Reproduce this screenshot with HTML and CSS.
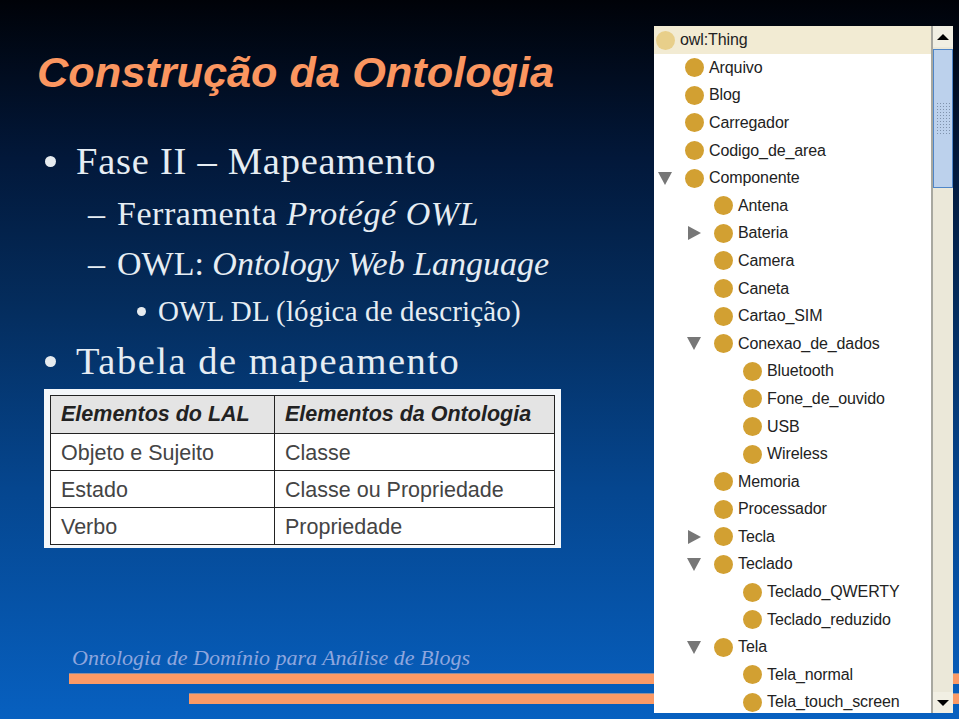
FILE: index.html
```html
<!DOCTYPE html>
<html lang="en">
<head>
    <meta charset="UTF-8">
    <meta name="viewport" content="width=device-width, initial-scale=1.0">
    <title>Construção da Ontologia</title>
    <link rel="stylesheet" href="styles.css">
</head>
<body>
    <div class="slide">
        <h1 class="title">Construção da Ontologia</h1>

        <div class="point level1 first"><span class="bullet"></span><span class="fase">Fase II – Mapeamento</span></div>
        <div class="point level2 ferr-row"><span class="dash">–</span><span class="ferr">Ferramenta <em>Protégé OWL</em></span></div>
        <div class="point level2"><span class="dash">–</span><span class="owl">OWL: <em>Ontology Web Language</em></span></div>
        <div class="point level3"><span class="bullet small"></span><span class="dl">OWL DL (lógica de descrição)</span></div>
        <div class="point level1"><span class="bullet"></span><span class="tab">Tabela de mapeamento</span></div>

        <div class="table-box">
            <table class="map-table">
                <tr class="head"><th>Elementos do LAL</th><th>Elementos da Ontologia</th></tr>
                <tr><td>Objeto e Sujeito</td><td>Classe</td></tr>
                <tr><td>Estado</td><td>Classe ou Propriedade</td></tr>
                <tr><td>Verbo</td><td>Propriedade</td></tr>
            </table>
        </div>

        <div class="footer-text">Ontologia de Domínio para Análise de Blogs</div>
        <div class="bar bar-top"></div>
        <div class="bar bar-bottom"></div>

        <div class="tree-panel">
            <ul class="tree">
                <li class="node root"><span class="dot"></span><span class="name">owl:Thing</span></li>
                <li class="node l1"><span class="slot"></span><span class="dot"></span><span class="name">Arquivo</span></li>
                <li class="node l1"><span class="slot"></span><span class="dot"></span><span class="name">Blog</span></li>
                <li class="node l1"><span class="slot"></span><span class="dot"></span><span class="name">Carregador</span></li>
                <li class="node l1"><span class="slot"></span><span class="dot"></span><span class="name">Codigo_de_area</span></li>
                <li class="node l1"><span class="slot open"></span><span class="dot"></span><span class="name">Componente</span></li>
                <li class="node l2"><span class="slot"></span><span class="dot"></span><span class="name">Antena</span></li>
                <li class="node l2"><span class="slot closed"></span><span class="dot"></span><span class="name">Bateria</span></li>
                <li class="node l2"><span class="slot"></span><span class="dot"></span><span class="name">Camera</span></li>
                <li class="node l2"><span class="slot"></span><span class="dot"></span><span class="name">Caneta</span></li>
                <li class="node l2"><span class="slot"></span><span class="dot"></span><span class="name">Cartao_SIM</span></li>
                <li class="node l2"><span class="slot open"></span><span class="dot"></span><span class="name">Conexao_de_dados</span></li>
                <li class="node l3"><span class="slot"></span><span class="dot"></span><span class="name">Bluetooth</span></li>
                <li class="node l3"><span class="slot"></span><span class="dot"></span><span class="name">Fone_de_ouvido</span></li>
                <li class="node l3"><span class="slot"></span><span class="dot"></span><span class="name">USB</span></li>
                <li class="node l3"><span class="slot"></span><span class="dot"></span><span class="name">Wireless</span></li>
                <li class="node l2"><span class="slot"></span><span class="dot"></span><span class="name">Memoria</span></li>
                <li class="node l2"><span class="slot"></span><span class="dot"></span><span class="name">Processador</span></li>
                <li class="node l2"><span class="slot closed"></span><span class="dot"></span><span class="name">Tecla</span></li>
                <li class="node l2"><span class="slot open"></span><span class="dot"></span><span class="name">Teclado</span></li>
                <li class="node l3"><span class="slot"></span><span class="dot"></span><span class="name">Teclado_QWERTY</span></li>
                <li class="node l3"><span class="slot"></span><span class="dot"></span><span class="name">Teclado_reduzido</span></li>
                <li class="node l2"><span class="slot open"></span><span class="dot"></span><span class="name">Tela</span></li>
                <li class="node l3"><span class="slot"></span><span class="dot"></span><span class="name">Tela_normal</span></li>
                <li class="node l3"><span class="slot"></span><span class="dot"></span><span class="name">Tela_touch_screen</span></li>
            </ul>
            <div class="scrollbar">
                <div class="scroll-btn"><span class="arrow-up"></span></div>
                <div class="scroll-thumb">
                    <div class="grip"></div>
                </div>
                <div class="scroll-track"></div>
                <div class="scroll-btn"><span class="arrow-down"></span></div>
            </div>
        </div>
    </div>
</body>
</html>
```

FILE: styles.css
```css
* {
    box-sizing: border-box;
}

body {
    margin: 0;
    padding: 0;
    background-color: #000;
}

.slide {
    position: relative;
    width: 959px;
    height: 719px;
    overflow: hidden;
    padding-top: 47px;
    display: flex;
    flex-direction: column;
    background: linear-gradient(to bottom, #000208 0%, #02183a 22%, #042c5c 42%, #05468f 68%, #0760c0 100%);
    font-family: "Liberation Serif", serif;
    color: #e6edf3;
}

.title {
    margin: 0 0 0 37px;
    font-family: "Liberation Sans", Arial, sans-serif;
    font-size: 43.3px;
    line-height: 51px;
    font-style: italic;
    font-weight: bold;
    color: #fb9660;
}

.point {
    display: flex;
    align-items: center;
    white-space: nowrap;
}

.level1 {
    height: 50px;
    padding-left: 45px;
    font-size: 38.5px;
}

.first {
    margin-top: 38px;
}

.level2 {
    height: 50px;
    padding-left: 88px;
    font-size: 34px;
}

.ferr-row {
    margin-top: 3px;
}

.level3 {
    height: 44px;
    margin-bottom: 3px;
    padding-left: 137px;
    font-size: 29px;
}

.bullet {
    width: 11px;
    height: 11px;
    margin-right: 20px;
    border-radius: 50%;
    background-color: #e6ebef;
}

.bullet.small {
    width: 9px;
    height: 9px;
    margin-right: 12px;
}

.dash {
    width: 29px;
}

.fase { letter-spacing: 0.75px; }
.ferr { letter-spacing: 0.55px; }
.owl { letter-spacing: 0; }
.dl { letter-spacing: 0.15px; }
.tab { letter-spacing: 1.5px; }

.table-box {
    width: 517px;
    height: 159px;
    margin: 3px 0 0 44px;
    padding: 6px;
    background-color: #f4f7fa;
}

.map-table {
    width: 505px;
    height: 148px;
    border-collapse: collapse;
    background-color: #fff;
    font-family: "Liberation Sans", Arial, sans-serif;
    font-size: 21.5px;
    color: #444;
}

.map-table th,
.map-table td {
    border: 1.5px solid #222;
    padding: 0 10px;
    text-align: left;
}

.map-table td {
    height: 37px;
    padding-top: 2px;
}

.map-table th:first-child,
.map-table td:first-child {
    width: 224px;
}

.map-table th {
    height: 38px;
    font-style: italic;
    background-color: #e4e4e4;
    color: #222;
}

.footer-text {
    margin: 97px 0 0 72px;
    font-size: 22px;
    line-height: 26px;
    font-style: italic;
    color: #8ea6de;
    white-space: nowrap;
}

.bar {
    height: 10px;
    background-color: #fb9a66;
    box-shadow: 0 -1px 0 #8d8ea0;
}

.bar-top {
    margin: 3px 0 0 69px;
}

.bar-bottom {
    margin: 10px 0 0 189px;
}

/* tree window sits on top of the slide and its bars */
.tree-panel {
    position: absolute;
    left: 654px;
    top: 26px;
    width: 299px;
    height: 687px;
    display: flex;
    background-color: #fff;
    font-family: "Liberation Sans", Arial, sans-serif;
    color: #222;
}

.tree {
    flex: 1;
    margin: 0;
    padding: 0;
    list-style: none;
    overflow: hidden;
}

.node {
    display: flex;
    align-items: center;
    height: 27.6px;
    padding-left: 2px;
    font-size: 16px;
    letter-spacing: -0.1px;
    white-space: nowrap;
}

.root {
    height: 28px;
    background-color: #f2ebd3;
}

.l2 { padding-left: 31px; }
.l3 { padding-left: 60px; }

.slot {
    flex: none;
    display: flex;
    align-items: center;
    width: 29px;
}

.open::before {
    content: "";
    margin-left: 2px;
    border-left: 7px solid transparent;
    border-right: 7px solid transparent;
    border-top: 13px solid #777;
}

.closed::before {
    content: "";
    margin-left: 3px;
    border-top: 7px solid transparent;
    border-bottom: 7px solid transparent;
    border-left: 13px solid #777;
}

.dot {
    flex: none;
    width: 19px;
    height: 19px;
    margin-right: 5px;
    border-radius: 50%;
    background-color: #d2a032;
}

.root .dot {
    background-color: #e8cf8a;
}

.scrollbar {
    width: 22px;
    display: flex;
    flex-direction: column;
    border-left: 2px solid #a8a8a0;
    background-color: #ebe8d9;
}

.scroll-btn {
    height: 21px;
    display: flex;
    align-items: center;
    justify-content: center;
    background-color: #f1efe3;
}

.arrow-up {
    border-left: 6px solid transparent;
    border-right: 6px solid transparent;
    border-bottom: 6px solid #000;
}

.arrow-down {
    border-left: 6px solid transparent;
    border-right: 6px solid transparent;
    border-top: 6px solid #000;
}

.scroll-thumb {
    height: 139px;
    margin-top: 2px;
    padding-top: 52px;
    background-color: #bcd1ec;
    border: 1px solid #4f86c8;
}

.grip {
    width: 14px;
    height: 32px;
    margin: 0 auto;
    background-image: radial-gradient(#7f93ad 0.8px, transparent 1px);
    background-size: 3px 3px;
}

.scroll-track {
    flex: 1;
}
```
